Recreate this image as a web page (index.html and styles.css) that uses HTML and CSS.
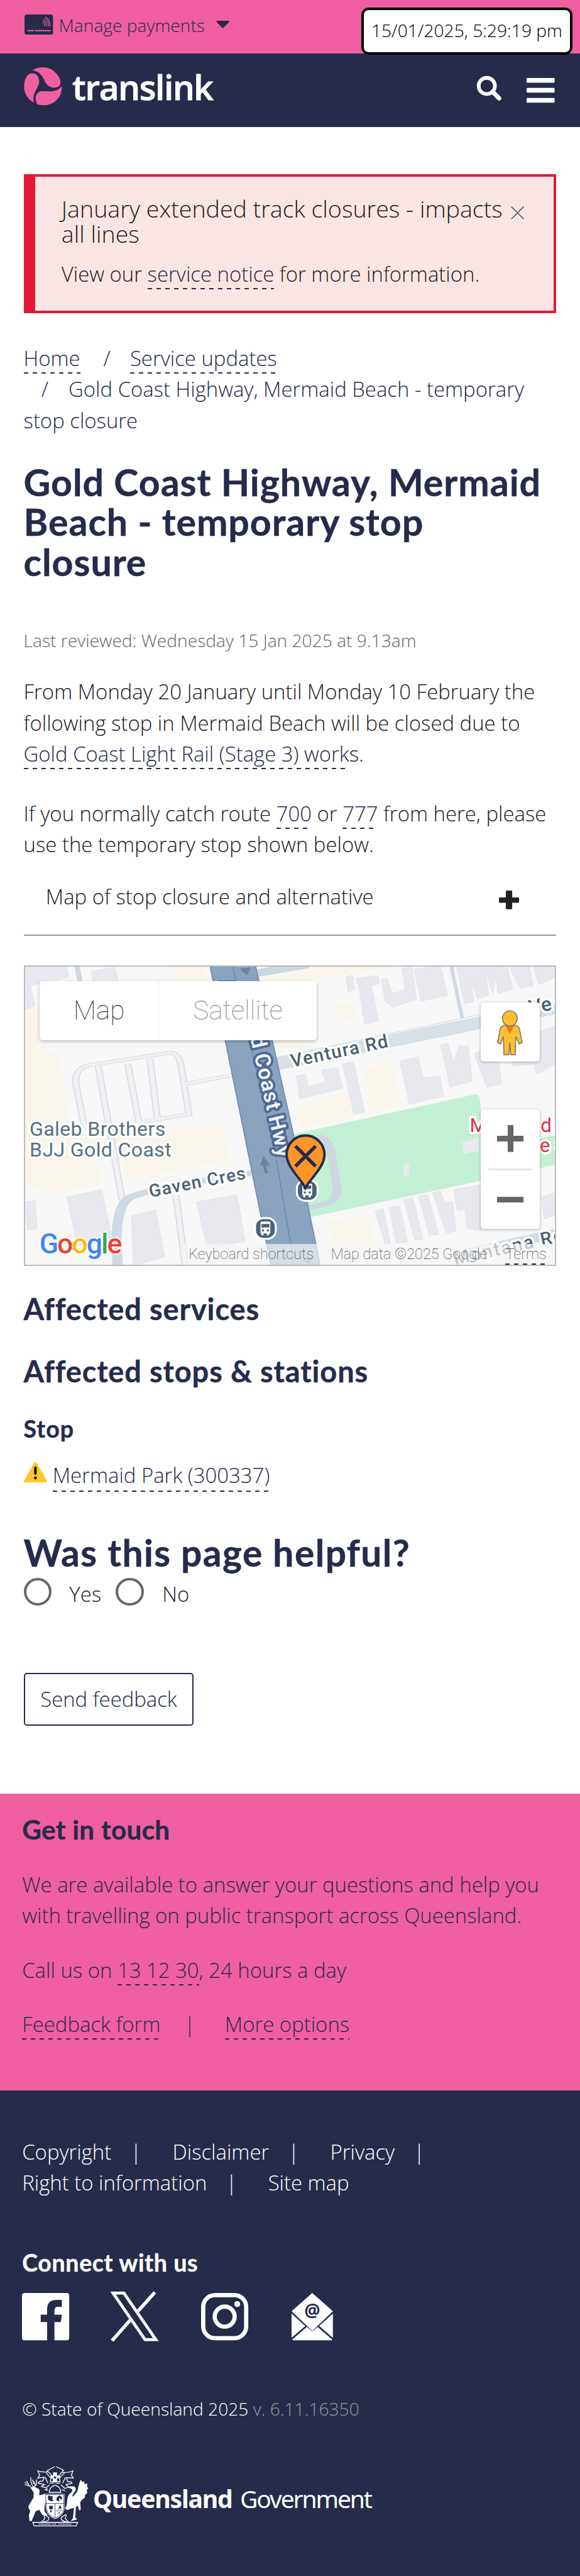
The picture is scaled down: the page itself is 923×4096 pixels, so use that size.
FILE: index.html
```html
<!DOCTYPE html>
<html lang="en">
<head>
<meta charset="utf-8">
<title>Gold Coast Highway, Mermaid Beach - temporary stop closure | Translink</title>
<link rel="stylesheet" href="styles.css">
</head>
<body>
<div class="topbar">
  <svg class="card-icon" viewBox="0 0 58 41"><rect width="58" height="41" rx="5" fill="#262b4c"/><path d="M6 33h13M21 33h32" stroke="#f05fa0" stroke-width="2.6"/><path d="M37 15q4 3 4 9M38 11q7 4 7 13M40 8q9 4 9 16M42 5q10 5 10 19" fill="none" stroke="#f05fa0" stroke-width="1.6"/></svg>
  <span class="pay">Manage payments</span>
  <svg class="caret" viewBox="0 0 27 15"><path d="M2 0h23q3 1 1 3L15 14q-1.500 1.500-3 0L1 3q-2-2 1-3z" fill="#262b4c"/></svg>
  <div class="stamp">15/01/2025, 5:29:19 pm</div>
</div>
<header class="header">
  <svg class="swirl" viewBox="0 0 77 77"><g fill="#f05fa0"><path d="M18 6C30-2 48-2 60 7C75 19 79 35 69 40C58 44 48 39 43 29C38 18 33 9 18 6Z"/><path d="M21 72C5 64-2 48 1 31C3 20 9 12 17 12C26 12 32 20 31 31C29 44 15 55 21 72Z"/><path d="M27 75C21 63 24 51 34 49C46 47 66 54 77 38C79 62 57 84 27 75Z"/></g></svg>
  <span class="brand">translink</span>
  <svg class="search" viewBox="0 0 50 50"><circle cx="20" cy="20" r="16.500" fill="none" stroke="#fff" stroke-width="7.500"/><path d="M32 32L45 45" stroke="#fff" stroke-width="9" stroke-linecap="round"/></svg>
  <svg class="burger" viewBox="0 0 57 50"><g fill="#fff"><rect width="57" height="9.500" rx="1.500"/><rect y="20.200" width="57" height="9.500" rx="1.500"/><rect y="40.500" width="57" height="9.500" rx="1.500"/></g></svg>
</header>
<main class="main">
  <section class="alert">
    <svg class="close" viewBox="0 0 27 30"><path d="M1 4L26 29M26 4L1 29" stroke="#fff" stroke-width="2.500"/><path d="M1 1L26 26M26 1L1 26" stroke="#666" stroke-width="2.500"/></svg>
    <div class="alert-title">January extended track closures - impacts<br>all lines</div>
    <p class="alert-text">View our <a>service notice</a> for more information.</p>
  </section>
  <nav class="crumbs"><a>Home</a><i class="s1">/</i><a>Service updates</a><br><i class="s2">/</i>Gold Coast Highway, Mermaid Beach - temporary<br>stop closure</nav>
  <h1>Gold Coast Highway, Mermaid<br>Beach - temporary stop<br>closure</h1>
  <p class="reviewed">Last reviewed: Wednesday 15 Jan 2025 at 9.13am</p>
  <p class="p1">From Monday 20 January until Monday 10 February the<br>following stop in Mermaid Beach will be closed due to<br><a>Gold Coast Light Rail (Stage 3) work</a>s.</p>
  <p class="p2">If you normally catch route <a>700</a> or <a>777</a> from here, please<br>use the temporary stop shown below.</p>
  <div class="accordion"><span>Map of stop closure and alternative</span><svg viewBox="0 0 41 38"><path d="M16 0h9q2 0 2 2v12h12q2 0 2 2v7q0 2-2 2H27v11q0 2-2 2h-9q-2 0-2-2V25H2q-2 0-2-2v-7q0-2 2-2h12V2q0-2 2-2z" fill="#212121"/></svg></div>

  <div class="map">
    <svg class="tiles" viewBox="3 3 1077 605" preserveAspectRatio="none">
      <rect width="1083" height="611" fill="#f7f7f7"/>
      <g transform="translate(-48 -20) scale(.752 .4082)">
        <g fill="#faf5ea">
          <path d="M66 260L105 250V450L160 500L215 900L240 870L600 850L622 1015L530 1050L340 1110L325 985L255 1000L275 1140L140 1180L66 1130Z"/>
          <path d="M465 55H553L560 130H480Z"/><path d="M700 120L870 55H1060L955 90L800 130Z"/><path d="M735 430H855L830 440L750 480Z"/>
          <path d="M900 255L955 238L962 310L908 334Z"/><path d="M985 565L1060 530L1083 745L1000 780Z"/><path d="M797 750L940 680L952 810L812 860Z"/>
          <path d="M885 1325L995 1280L1012 1440L905 1470Z"/>
        </g>
        <path d="M160 500L470 430L560 470L600 850L240 900L190 900Z" fill="#f7f7f7"/>
        <g fill="#e8e9ee" stroke="#dcdde5" stroke-width="1.500">
          <path d="M66 55H180L186 110L82 150L95 250L66 270Z"/><path d="M247 80L310 60L320 130H250Z"/>
          <path d="M935 105L952 100L958 170L940 180Z"/><path d="M962 115L1020 100L1025 140L1003 150L1022 325L985 342L970 170Z"/><path d="M1030 120L1045 115L1060 190L1095 170L1085 65L1112 58L1125 220L1060 258L1040 230Z"/><path d="M1118 70L1190 55L1208 200L1137 228Z"/>
          <path d="M1230 55L1310 55L1320 200L1290 215L1270 120L1280 230L1255 240Z"/><path d="M1310 55H1370L1385 170L1345 190L1340 110L1330 190Z"/><path d="M1375 55H1430L1440 150L1405 165Z"/><path d="M1440 55H1500V110L1455 145Z"/>
          <path d="M800 600L825 590L832 650L880 630L868 570L912 558L925 660L810 715Z"/><path d="M925 540L955 530L985 780L955 790Z"/><path d="M1080 525L1130 505L1142 610L1188 600L1198 700L1105 740Z"/><path d="M1190 445L1210 435L1225 530L1240 450L1265 450L1275 625L1215 655Z"/><path d="M1280 490L1340 440L1355 640L1315 655Z"/><path d="M1370 440L1500 350V540L1450 590L1440 540L1385 550Z"/>
          <path d="M180 1200L275 1165L302 1400L210 1445Z"/><path d="M66 1225L95 1220L100 1360L75 1365Z"/><path d="M355 1295L420 1265L445 1500L360 1540Z"/><path d="M530 1225L640 1190L662 1420L560 1455Z"/>
          <path d="M1013 1270L1035 1260L1055 1430L1040 1440Z"/><path d="M1050 1250L1080 1245L1100 1425L1070 1430Z"/><path d="M1090 1215L1115 1205L1142 1410L1120 1415Z"/><path d="M1130 1195L1155 1190L1185 1385L1160 1395Z"/><path d="M1168 1180L1190 1170L1200 1230L1222 1225L1232 1370L1205 1380Z"/><path d="M1225 1165L1300 1140V1370L1260 1355L1255 1260L1235 1270Z"/><path d="M1462 1200L1500 1180V1290L1470 1310Z"/>
        </g>
        <path d="M790 890L1285 690Q1297 690 1298 750V800L1503 900V1040L835 1303Z" fill="#c3f0d5"/>
        <path d="M1299 680L1503 600V890L1460 910L1299 830Z" fill="#f7f7f7"/>
        <path d="M1247 930L1290 910L1295 970L1253 988Z" fill="#e8e9ee"/><path d="M1090 1035h15v60h-15z" fill="#e8e9ee"/>
        <path d="M860 905Q888 900 895 990L910 1150Q915 1215 880 1235L830 1255" fill="none" stroke="#cdd7e2" stroke-width="24"/>
        <g fill="none" stroke="#d8dbe2" stroke-width="19"><path d="M230 870L205 640Q200 560 245 545L455 485Q485 480 490 560L510 790L375 830M345 540L375 830M405 515L425 810M265 550L330 1220M500 640L640 590M475 1190L500 1540"/></g>
        <g fill="none" stroke="#f0f1f4" stroke-width="13"><path d="M230 870L205 640Q200 560 245 545L455 485Q485 480 490 560L510 790L375 830M345 540L375 830M405 515L425 810M265 550L330 1220M500 640L640 590M475 1190L500 1540"/></g>
        <path d="M208 55L216 130M1221 55L1250 310" stroke="#ced9e3" stroke-width="14" fill="none"/>
        <path d="M1228 60L1257 310" stroke="#f7f7f7" stroke-width="8"/>
        <path d="M690 90L830 45" stroke="#cbd8e2" stroke-width="38"/><path d="M735 545L1310 330L1503 260" stroke="#d7dfe7" stroke-width="60" fill="none"/><path d="M740 510L1295 295" stroke="#c2ced9" stroke-width="2"/>
        <path d="M318 1540Q305 1270 345 1210Q380 1165 700 1075" stroke="#cfdae4" stroke-width="28" fill="none"/>
        <path d="M1220 1500L1503 1380" stroke="#d2dce5" stroke-width="45"/>
        <path d="M567 52H690L790 870L865 1543H732L650 800Z" fill="#8aa4c0"/>
        <path d="M567 52L650 800L732 1543M628 52L745 1000L795 1543M690 52L790 870L865 1543" fill="none" stroke="#6c8eb5" stroke-width="3"/>
        <path d="M648 65L677 60L667 102ZM712 995L730 1045L702 1045ZM709 1040H718L724 1080L715 1084ZM817 1505L845 1500L833 1540Z" fill="#71819c"/>
        <path d="M590 125h46v8h-46z" fill="#326bc2"/>
      </g>
      <g class="lbl">
        <text class="hwy" transform="translate(460 147) rotate(77)" textLength="251" font-size="43">d Coast Hwy</text>
        <g class="road"><text transform="translate(545 207) rotate(-11.800)" textLength="201" font-size="37">Ventura Rd</text>
        <text transform="translate(257 471) rotate(-11)" textLength="199" font-size="36">Gaven Cres</text>
        <text transform="translate(1029 100) rotate(-11.800)" font-size="40">Ve</text>
        <text transform="translate(876 608) rotate(-12.400)" textLength="228" font-size="37">Montana Rd</text></g>
        <g class="place"><text x="12" y="346" textLength="276" font-size="41">Galeb Brothers</text><text x="12" y="388" textLength="288" font-size="41">BJJ Gold Coast</text></g>
        <g class="red"><text x="906" y="338" font-size="40">M</text><text x="1050" y="338" font-size="40">d</text><text x="1048" y="379" font-size="40">e S</text></g>
      </g>
      <g><rect x="555" y="436" width="42" height="42" rx="17" fill="#47627a" stroke="#fff" stroke-width="4"/><path d="M566 446q0-3 3-3h14q3 0 3 3v21h-3v4h-4v-4h-7v4h-4v-4h-2z" fill="#fff"/><path d="M568 447h16v7h-16zM569 459h4v4h-4zM579 459h4v4h-4z" fill="#47627a"/></g>
      <g><rect x="470" y="513" width="42" height="42" rx="17" fill="#47627a" stroke="#fff" stroke-width="4"/><path d="M481 523q0-3 3-3h14q3 0 3 3v21h-3v4h-4v-4h-7v4h-4v-4h-2z" fill="#fff"/><path d="M483 525h16v7h-16zM484 536h4v4h-4zM494 536h4v4h-4z" fill="#47627a"/></g>
      <path d="M572 452C564 434 534 410 534 384A38 38 0 0 1 611 384C611 410 581 434 572 452Z" fill="#fa9628" stroke="#262b4c" stroke-width="5"/>
      <path d="M552 367L593 408M593 367L552 408" stroke="#262b4c" stroke-width="7"/>
      <text class="goog" x="32" y="584" textLength="168" font-size="57"><tspan fill="#4285f4">G</tspan><tspan fill="#ea4335">o</tspan><tspan fill="#fbbc04">o</tspan><tspan fill="#4285f4">g</tspan><tspan fill="#34a853">l</tspan><tspan fill="#ea4335">e</tspan></text>
    </svg>
    <div class="types"><span class="t-map">Map</span><span class="t-sat">Satellite</span></div>
    <div class="pegman"><svg viewBox="0 0 52 92"><g fill="#fdbf2d" stroke="#777" stroke-width="2"><path d="M13 31h26l6 5 6 30-6 3-7-15-1 37H28l-2-25-2 25H14l-1-37-6 15-6-3 6-30z"/><ellipse cx="26" cy="17" rx="15" ry="15.500"/></g><path d="M16 31q10 4 20 0L26 48z" fill="#e27b2c"/></svg></div>
    <div class="zoom"><b class="plus"></b><hr><b class="minus"></b></div>
    <div class="legal"><span class="k">Keyboard shortcuts</span><span class="d">Map data ©2025 Google</span><a>Terms</a></div>
  </div>

  <h2 class="h-serv">Affected services</h2>
  <h2 class="h-stops">Affected stops &amp; stations</h2>
  <h3>Stop</h3>
  <div class="stop"><svg viewBox="0 0 47 41"><path d="M21 1q2.500-2 5 0L47 38q0 3-2 3H2q-2 0-2-3z" fill="#ffc627"/><path d="M23.500 11v12" stroke="#000" stroke-width="5" stroke-linecap="round"/><circle cx="23.500" cy="32" r="2.900"/></svg><a>Mermaid Park (300337)</a></div>
  <h2 class="h-help">Was this page helpful?</h2>
  <div class="radios"><i></i><span class="yes">Yes</span><i></i><span class="no">No</span></div>
  <button class="send">Send feedback</button>
</main>
<section class="touch">
  <h3>Get in touch</h3>
  <p class="avail">We are available to answer your questions and help you<br>with travelling on public transport across Queensland.</p>
  <p class="call">Call us on <a>13 12 30</a>, 24 hours a day</p>
  <p class="opts"><a>Feedback form</a><i>|</i><a>More options</a></p>
</section>
<footer class="footer">
  <nav class="links">Copyright<i>|</i>Disclaimer<i>|</i>Privacy<i>|</i><br>Right to information<i>|</i>Site map</nav>
  <h3>Connect with us</h3>
  <div class="social">
    <svg class="fb" viewBox="0 0 96 96"><path fill="#fff" d="M5 0h86q5 0 5 5v86q0 5-5 5H66V59h13l2-15H66v-9q0-7 8-7h7V14H70Q51 14 51 33v11H38v15h13v37H5q-5 0-5-5V5q0-5 5-5z"/></svg>
    <svg class="tw" viewBox="0 0 98 98"><path d="M5 1.500H27L92 96H70Z" fill="none" stroke="#fff" stroke-width="6"/><path d="M90 0L53 41M42 54L3 98" stroke="#fff" stroke-width="7"/></svg>
    <svg class="ig" viewBox="0 0 96 96"><g fill="none" stroke="#fff" stroke-width="8.600"><rect x="4.300" y="4.300" width="87.400" height="87.400" rx="24"/><circle cx="48" cy="48" r="20.300"/></g><circle cx="73.500" cy="22.500" r="6" fill="#fff"/></svg>
    <svg class="mail" viewBox="0 0 84 96"><path fill="#fff" d="M42 0L84 37L42 77L0 37ZM0 42L28 67L0 91ZM84 42L56 67L84 91ZM31 69L42 78L53 69L82 94V96H2V94Z"/><text x="42" y="48" text-anchor="middle" font-size="36" font-weight="700">@</text></svg>
  </div>
  <p class="copy">© State of Queensland 2025 <span>v. 6.11.16350</span></p>
  <div class="gov">
    <svg class="crest" viewBox="24 28 396 368">
      <g fill="#fff">
        <path d="M70 165Q60 158 84 148L98 158Q118 162 120 178Q114 190 118 204L150 196L158 215L148 290Q150 312 168 322L164 332L134 322L118 294Q100 296 92 306L88 320L70 362L57 361L54 326L62 298Q52 290 50 272Q62 250 82 218L83 188Z"/>
        <path d="M290 155Q308 145 332 150Q348 160 336 180Q322 196 318 212Q335 206 352 176Q360 130 372 108L382 124L392 118L396 136L412 130L410 150L418 160L408 174L412 190L396 204L398 218L378 232L368 248L372 290L362 298L354 268L342 276L338 340L350 352L310 362L324 344L330 280L300 290Q282 300 276 282Q290 262 288 232Q292 200 312 188Q324 176 318 166Z"/>
        <path d="M152 196H272V290Q262 332 214 350Q168 332 158 290Z"/>
        <path d="M202 64H226V82H242V100H226V124H200V100H186V82H202Z"/>
      </g>
      <g fill="none" stroke="#fff" stroke-width="5">
        <path d="M74 168L62 148L28 138M55 145L40 116M28 124L42 134M82 158Q60 120 66 94M84 156L100 138V106M84 136L76 108M92 142L86 118"/>
        <path d="M212 28L166 54L192 80L184 124M220 28L266 50L242 80L244 124M186 120H242M182 130H246M178 186Q182 150 214 142Q248 150 250 186Z"/>
        <path d="M172 60Q130 64 108 54L120 82L108 98L148 94L138 118Q114 114 110 130L150 138L130 150L158 158L180 140M258 64Q300 66 324 54L314 82L326 98L284 96L292 122Q318 116 318 130L282 138L298 154L274 162L250 140M154 94L170 130M278 94L260 130M168 162L154 170L172 174M256 168L276 178M184 94L160 66M246 94L272 66"/>
        <path d="M78 370H352L344 392H86ZM126 368Q144 362 152 340Q140 328 150 324L176 340Q180 366 142 366M302 368Q284 362 276 342Q286 328 280 322L252 340Q246 362 290 368"/>
      </g>
      <g fill="none" stroke="#262b4c" stroke-width="3"><path d="M156 200H268V290Q258 326 214 344Q172 326 162 290ZM158 254H270M214 254V344M202 154V178M226 154V178M195 166H209M219 166H233"/><path d="M228 300L248 322M248 300L228 322M222 300Q238 286 258 298"/></g>
      <g fill="#262b4c"><path d="M170 208Q176 204 190 210L200 208L198 230L206 240H188L172 232ZM222 232Q222 210 242 206Q262 212 256 228Q248 234 244 222L238 222L242 240L226 238ZM176 266L184 272L188 264L194 272L202 268L198 290H180ZM182 296H196L192 308H186ZM244 264L256 284H234ZM212 86L205 94L214 104L222 94Z"/><path d="M206 126h16v5h-16z"/></g>
      <path d="M116 381H190M198 381H222M236 381H316" stroke="#fff" stroke-width="8" stroke-dasharray="4 5"/>
    </svg>
    <span class="g1">Queensland</span><span class="g2">Government</span>
  </div>
</footer>
</body>
</html>
```

FILE: styles.css
```css
/* 1rem = 78.287px; every size below is a share of that unit */
html { font-size: 78.287px; }
* { box-sizing: border-box; }
body { margin: 0; background: #fff; color: #212121; font-family: "Open Sans", sans-serif; font-weight: 300; font-size: .42rem; line-height: .63rem; white-space: nowrap; width: 923px; height: 4096px; overflow: hidden; }
p, h1, h2, h3 { margin: 0; }
i { font-style: normal; }
svg { display: block; flex: none; overflow: visible; }
h1, h2, h3 { font-family: Lato, sans-serif; font-weight: 700; color: #262b4c; -webkit-text-stroke: .4px; }
a { color: #262b4c; padding-bottom: .03rem; background: repeating-linear-gradient(90deg, #262b4c 0 7px, transparent 7px 14px) left bottom / 100% .03rem no-repeat; }

.topbar { position: relative; display: flex; height: 1.08rem; background: #f05fa0; color: #262b4c; padding-left: .495rem; font-size: .36rem; line-height: .54rem; }
.card-icon { width: .58rem; height: .41rem; margin-top: .29rem; }
.pay { margin: .246rem 0 0 .12rem; width: 3.2rem; }
.caret { width: .27rem; height: .15rem; margin-top: .42rem; }
.stamp { position: absolute; z-index: 2; left: 7.34rem; top: .15rem; width: 4.3rem; height: .96rem; border: .06rem solid #000; border-radius: .15rem; background: #fff; color: #000; line-height: .82rem; text-align: center; }

.header { display: flex; height: 1.5rem; background: #262b4c; color: #fff; padding-left: .48rem; }
.swirl { width: .77rem; height: .77rem; margin-top: .29rem; }
.brand { font-size: .7rem; font-weight: 600; line-height: .9rem; margin: .233rem 0 0 .22rem; width: 8.23rem; letter-spacing: -.017rem; -webkit-text-stroke: .9px #fff; }
.search { width: .5rem; height: .5rem; margin-top: .46rem; }
.burger { width: .57rem; height: .5rem; margin: .5rem 0 0 .5rem; }

.main { padding: .96rem .48rem 0; height: 33.85rem; }
.alert { position: relative; height: 2.82rem; border: .06rem solid #e31937; border-left-width: .24rem; background: #f9e5e3; padding: .4rem 0 0 .54rem; }
.alert-title { font-size: .48rem; line-height: .51rem; }
.alert-text { margin-top: .235rem; }
.close { position: absolute; left: 9.68rem; top: .6rem; width: .27rem; height: .3rem; }
.crumbs { margin-top: .6rem; color: #262b4c; }
.crumbs .s1 { margin: 0 .4rem 0 .47rem; }
.crumbs .s2 { margin: 0 .41rem 0 .36rem; }
h1 { margin-top: .535rem; font-size: .755rem; line-height: .81rem; letter-spacing: .012rem; }
.reviewed { margin-top: .915rem; font-size: .36rem; line-height: .54rem; color: #666; }
.p1 { margin-top: .466rem; }
.p2 { margin-top: .586rem; }
.accordion { display: flex; justify-content: space-between; height: 1.53rem; border-bottom: .03rem solid #999; padding: .42rem .76rem 0 .45rem; }
.accordion svg { width: .41rem; height: .38rem; margin-top: .2rem; }

.map { position: relative; margin-top: .6rem; height: 6.11rem; border: .03rem solid #bbb; overflow: hidden; font-family: Roboto, sans-serif; font-weight: 100; }
.tiles { width: 100%; height: 100%; }
.lbl text { font-family: Roboto, sans-serif; font-weight: 500; paint-order: stroke; stroke: #fff; stroke-width: 9px; stroke-linejoin: round; }
.lbl .hwy { fill: #f0f6ff; stroke: #4f6a95; stroke-width: 10px; font-weight: 600; }
.road { fill: #4c6073; }
.lbl .place text { fill: #56707f; font-weight: 400; }
.lbl .red text { fill: #dc3545; font-weight: 400; }
.goog { font-family: Roboto, sans-serif; font-weight: 500; paint-order: stroke; stroke: #fff; stroke-width: 4px; }
.types { position: absolute; left: .3rem; top: .3rem; width: 5.63rem; height: 1.2rem; display: flex; background: #fff; border-radius: .06rem; box-shadow: 0 2px 5px rgba(0,0,0,.25); font-size: .54rem; line-height: 1.2rem; }
.types span { text-align: center; }
.t-map { width: 2.43rem; color: #333; border-right: 1px solid #e8e8e8; }
.t-sat { width: 3.2rem; color: #8a8a8a; }
.pegman { position: absolute; left: 9.27rem; top: .74rem; width: 1.2rem; height: 1.2rem; background: #fff; border-radius: .06rem; box-shadow: 0 1px 4px rgba(0,0,0,.3); padding: .15rem .33rem; }
.pegman svg { width: .52rem; height: .92rem; }
.zoom { position: absolute; left: 9.27rem; top: 2.9rem; width: 1.2rem; height: 2.43rem; background: #fff; border-radius: .06rem; box-shadow: 0 1px 4px rgba(0,0,0,.3); padding: .33rem .15rem 0; }
.zoom b { display: block; margin: 0 auto; }
.plus { width: .54rem; height: .54rem; background: linear-gradient(#666, #666) center / 100% .12rem no-repeat, linear-gradient(#666, #666) center / .12rem 100% no-repeat; }
.zoom hr { margin: .34rem 0 .54rem; border: 0; height: .03rem; background: #e6e6e6; }
.minus { width: .54rem; height: .12rem; background: #666; }
.legal { position: absolute; left: 3.23rem; right: 0; bottom: 0; height: .42rem; padding-left: .1rem; display: flex; background: rgba(245,245,245,.7); font-size: .3rem; line-height: .42rem; color: #444; }
.k { width: 2.89rem; }
.d { width: 3.55rem; }
.legal a { color: #444; padding: 0; }

h2 { letter-spacing: .011rem; }
.h-serv { margin-top: .518rem; font-size: .6rem; line-height: .72rem; }
.h-stops { margin-top: .54rem; font-size: .6rem; line-height: .72rem; }
h3 { font-size: .48rem; line-height: .6rem; letter-spacing: .008rem; }
.main h3 { margin-top: .523rem; letter-spacing: .013rem; }
.stop { display: flex; margin-top: .311rem; }
.stop svg { width: .47rem; height: .41rem; margin: .06rem .12rem 0 0; }
.h-help { margin-top: .83rem; margin-bottom: .01rem; font-size: .75rem; line-height: .81rem; letter-spacing: .018rem; }
.radios { display: flex; margin-top: .1rem; height: .57rem; }
.radios i { width: .57rem; height: .57rem; border: .06rem solid #666; border-radius: 50%; }
.radios span { margin: .02rem 0 0 .36rem; }
.yes { width: .94rem; }
.radios .no { margin-left: .38rem; }
.send { display: block; margin-top: 1.36rem; width: 3.46rem; height: 1.08rem; padding: 0; border: .03rem solid #262b4c; border-radius: .06rem; background: #fff; color: #262b4c; font: 300 .42rem/1rem "Open Sans", sans-serif; }

.touch { height: 6.03rem; background: #f05fa0; color: #262b4c; padding: .391rem .45rem 0; }
.touch h3 { font-size: .54rem; line-height: .66rem; letter-spacing: .004rem; }
.avail, .call, .opts { margin-top: .478rem; }
.opts i { margin: 0 .6rem 0 .48rem; }

.footer { height: 9.87rem; background: #262b4c; color: #fff; padding: .932rem .45rem 0; }
.links i { margin: 0 .63rem 0 .385rem; }
.footer h3 { margin-top: 1.009rem; color: #fff; }
.social { display: flex; margin-top: .31rem; height: .96rem; }
.fb { width: .96rem; height: .96rem; }
.tw { width: .98rem; height: .98rem; margin: -.01rem 0 0 .84rem; }
.ig { width: .96rem; height: .96rem; margin-left: .86rem; }
.mail { width: .84rem; height: .96rem; margin-left: .88rem; }
.mail text { fill: #262b4c; }
.copy { margin-top: 1.12rem; font-size: .36rem; line-height: .54rem; }
.copy span { color: #999; }
.gov { display: flex; margin-top: .91rem; font-family: "Noto Sans", sans-serif; }
.crest { width: 1.32rem; height: 1.22rem; margin-left: .03rem; }
.g1 { margin: .335rem 0 0 .09rem; font-weight: 700; font-size: .5rem; width: 2.99rem; letter-spacing: -.015rem; }
.g2 { margin-top: .335rem; font-weight: 400; font-size: .5rem; letter-spacing: -.028rem; }
```
